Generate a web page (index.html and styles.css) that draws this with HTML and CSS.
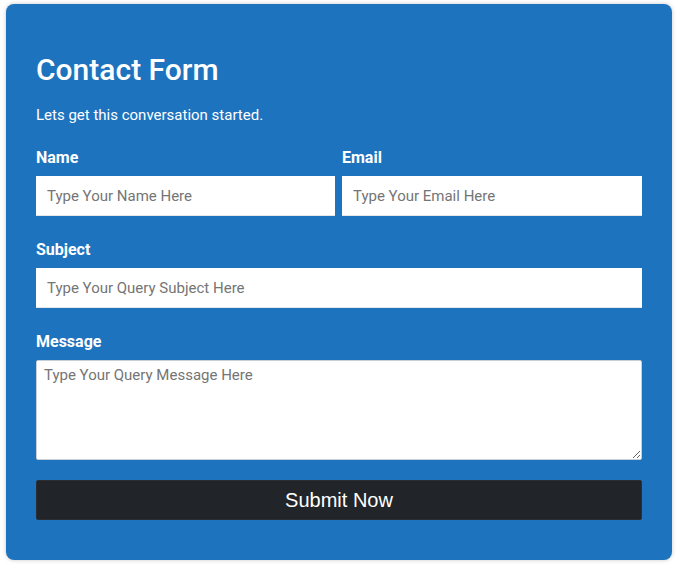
FILE: index.html
```html
<!DOCTYPE html>
<html lang="en">
<head>
<meta charset="utf-8">
<title>Contact Form</title>
<link rel="stylesheet" href="styles.css">
</head>
<body>
<form class="card">
  <h1 class="title">Contact Form</h1>
  <p class="subtitle">Lets get this conversation started.</p>
  <div class="row">
    <div class="field">
      <label class="label" for="name">Name</label>
      <input class="input" id="name" type="text" placeholder="Type Your Name Here">
    </div>
    <div class="field">
      <label class="label" for="email">Email</label>
      <input class="input" id="email" type="email" placeholder="Type Your Email Here">
    </div>
  </div>
  <div class="field">
    <label class="label" for="subject">Subject</label>
    <input class="input" id="subject" type="text" placeholder="Type Your Query Subject Here">
  </div>
  <div class="field">
    <label class="label" for="message">Message</label>
    <textarea class="textarea" id="message" placeholder="Type Your Query Message Here"></textarea>
  </div>
  <button class="submit" type="button">Submit Now</button>
</form>
</body>
</html>
```
FILE: styles.css
```css
html, body {
  margin: 0;
  padding: 0;
  background: #ffffff;
}
body {
  padding: 4px 7px 4px 6px;
  font-family: Roboto, "Liberation Sans", Arial, sans-serif;
}
.card {
  box-sizing: border-box;
  width: 666px;
  height: 556px;
  background: #1e73be;
  border-radius: 8px;
  box-shadow: 0 0 4px rgba(0, 0, 0, 0.22);
  padding: 48px 30px 40px 30px;
  display: flex;
  flex-direction: column;
  color: #ffffff;
}
.title {
  margin: 0;
  font-size: 30px;
  font-weight: 500;
  line-height: 36px;
}
.subtitle {
  margin: 16px 0 0 0;
  font-size: 15px;
  line-height: 22.5px;
}
.row {
  display: grid;
  grid-template-columns: 299px 300px;
  column-gap: 7px;
  margin-top: 19px;
}
.row .field {
  margin-top: 0;
}
.field {
  display: flex;
  flex-direction: column;
  margin-top: 22px;
}
.label {
  font-size: 16px;
  font-weight: 700;
  line-height: 24px;
  margin-bottom: 6px;
}
.input {
  box-sizing: border-box;
  height: 40px;
  width: 100%;
  border: none;
  border-bottom: 1px solid #e4e7ea;
  background: #ffffff;
  padding: 2px 11px 0 11px;
  font-family: Roboto, "Liberation Sans", Arial, sans-serif;
  font-size: 15px;
  color: #333333;
  outline: none;
  margin: 0;
}
.textarea {
  box-sizing: border-box;
  height: 100px;
  width: 100%;
  border: 1px solid #c9cfd6;
  border-radius: 2px;
  background: #ffffff;
  padding: 3px 7px;
  font-family: Roboto, "Liberation Sans", Arial, sans-serif;
  font-size: 15px;
  line-height: 22.5px;
  color: #333333;
  margin: 0;
  outline: none;
}
.input::placeholder,
.textarea::placeholder {
  color: #757575;
}
.submit {
  box-sizing: border-box;
  margin-top: 20px;
  height: 40px;
  width: 100%;
  background: #212529;
  border: 1px solid #2b2f33;
  border-radius: 2px;
  color: #ffffff;
  font-family: "Liberation Sans", Arial, sans-serif;
  font-size: 20px;
  padding: 2px 0 0 0;
  cursor: pointer;
}
```
